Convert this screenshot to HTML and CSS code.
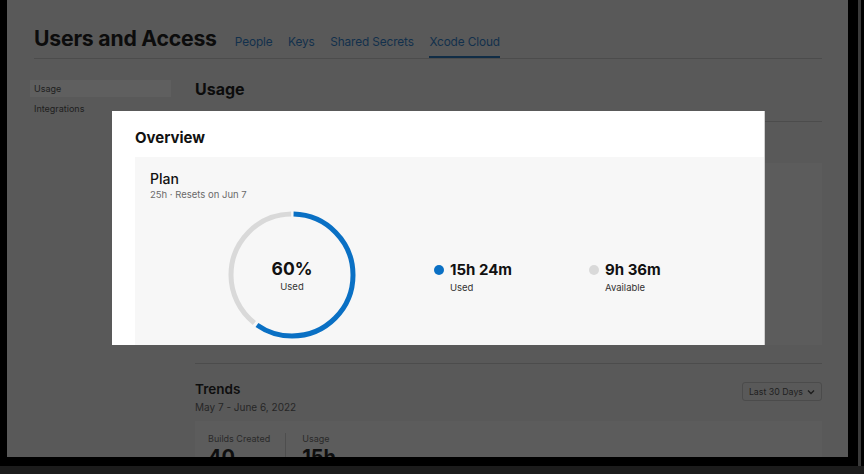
FILE: index.html
```html
<!DOCTYPE html>
<html>
<head>
<meta charset="utf-8">
<link rel="stylesheet" href="styles.css">
</head>
<body>
<div class="frame">
  <div class="screen">
    <header class="top">
      <h1 class="title">Users and Access</h1>
      <nav class="tabs">
        <span class="tab">People</span>
        <span class="tab">Keys</span>
        <span class="tab">Shared Secrets</span>
        <span class="tab active">Xcode Cloud</span>
      </nav>
    </header>
    <div class="body">
      <aside class="side">
        <div class="side-item selected">Usage</div>
        <div class="side-item">Integrations</div>
      </aside>
      <main class="main">
        <h2 class="usage-h">Usage</h2>
        <div class="rule"></div>
        <div class="dim-box"></div>
        <div class="rule rule2"></div>
        <div class="trends-head">
          <div>
            <div class="trends-t">Trends</div>
            <div class="trends-d">May 7 - June 6, 2022</div>
          </div>
          <div class="select">Last 30 Days
            <svg width="8" height="6" viewBox="0 0 8 6"><path d="M1 1.5 L4 4.5 L7 1.5" fill="none" stroke="#1c1c1c" stroke-width="1.3"/></svg>
          </div>
        </div>
        <div class="stats">
          <div class="stat">
            <div class="stat-l">Builds Created</div>
            <div class="stat-v">40 <small>+4%</small></div>
          </div>
          <div class="stat-sep"></div>
          <div class="stat">
            <div class="stat-l">Usage</div>
            <div class="stat-v">15h <small>0%</small></div>
          </div>
        </div>
      </main>
    </div>

    <section class="spot">
      <h3 class="spot-title">Overview</h3>
      <div class="plan">
        <div class="plan-t">Plan</div>
        <div class="plan-s">25h · Resets on Jun 7</div>
        <div class="plan-row">
          <div class="donut">
            <svg width="128" height="128" viewBox="0 0 128 128">
              <g transform="rotate(-90 64 64)">
                <circle cx="64" cy="64" r="61" fill="none" stroke="#d9d9d9" stroke-width="5" stroke-dasharray="150 400" stroke-dashoffset="-231.8"/>
                <circle cx="64" cy="64" r="61" fill="none" stroke="#0a70c4" stroke-width="5" stroke-dasharray="227 400" stroke-dashoffset="-1.6"/>
              </g>
            </svg>
            <div class="donut-c">
              <div class="donut-v">60%</div>
              <div class="donut-l">Used</div>
            </div>
          </div>
          <div class="legend legend-used">
            <span class="dot blue"></span>
            <div>
              <div class="leg-v">15h 24m</div>
              <div class="leg-l">Used</div>
            </div>
          </div>
          <div class="legend legend-avail">
            <span class="dot grey"></span>
            <div>
              <div class="leg-v">9h 36m</div>
              <div class="leg-l">Available</div>
            </div>
          </div>
        </div>
      </div>
    </section>
  </div>
  <div class="edge"></div>
</div>
<div class="bottom"></div>
</body>
</html>
```

FILE: styles.css
```css
* { box-sizing: border-box; }
html, body { margin: 0; padding: 0; }
body {
  width: 864px;
  height: 474px;
  background: #000;
  font-family: Inter, "Noto Sans", "Liberation Sans", sans-serif;
  overflow: hidden;
}
.frame {
  display: flex;
  height: 466px;
  padding-left: 7px;
}
.screen {
  position: relative;
  width: 841px;
  height: 457px;
  background: #595959;
  overflow: hidden;
  color: #101010;
}
.edge {
  width: 3px;
  height: 466px;
  margin-left: 10px;
  background: #3a3a3a;
}
.bottom {
  height: 8px;
  background: #1c1c1c;
}

/* header */
.top {
  display: flex;
  align-items: flex-end;
  margin: 0 26px 0 27px;
  padding-top: 24px;
  border-bottom: 1px solid #4c4c4c;
  height: 59px;
}
.title {
  margin: 0 18px 0 0;
  font-size: 21.2px;
  font-weight: 700;
  letter-spacing: -0.2px;
  line-height: 27px;
  padding-bottom: 6px;
  color: #0c0c0c;
}
.tabs {
  display: flex;
  gap: 15.5px;
}
.tab {
  font-size: 11.8px;
  letter-spacing: -0.1px;
  color: #12304c;
  line-height: 16px;
  padding-bottom: 6px;
  border-bottom: 2px solid transparent;
}
.tab.active {
  border-bottom-color: #112d46;
}

/* body */
.body {
  display: flex;
  padding-left: 23px;
  padding-right: 26px;
}
.side {
  width: 141px;
  margin-right: 24px;
  padding-top: 21px;
}
.side-item {
  font-size: 9px;
  color: #1e1e1e;
  height: 17px;
  line-height: 17px;
  padding-left: 4px;
  margin-bottom: 3px;
}
.side-item.selected {
  background: #5f5f5f;
}
.main {
  flex: 1;
}
.usage-h {
  margin: 20px 0 0;
  font-size: 16px;
  font-weight: 700;
  line-height: 20px;
  color: #0c0c0c;
}
.rule {
  height: 1px;
  background: #4c4c4c;
  margin-top: 22px;
}
.dim-box {
  height: 182px;
  margin-top: 41px;
  background: #5c5c5c;
}
.rule2 {
  margin-top: 18px;
}
.trends-head {
  display: flex;
  justify-content: space-between;
  align-items: flex-start;
  margin-top: 17px;
}
.trends-t {
  font-size: 13.5px;
  font-weight: 600;
  line-height: 17px;
  color: #0e0e0e;
}
.trends-d {
  font-size: 10px;
  color: #262626;
  margin-top: 3px;
  line-height: 13px;
}
.select {
  display: flex;
  align-items: center;
  gap: 4px;
  height: 19px;
  margin-top: 1px;
  padding: 0 6px;
  border: 1px solid #4b4b4b;
  border-radius: 3px;
  font-size: 8.8px;
  color: #1f1f1f;
}
.stats {
  display: flex;
  margin-top: 7px;
  height: 60px;
  background: #5c5c5c;
  padding: 12px 13px 0;
}
.stat-l {
  font-size: 9px;
  color: #2a2a2a;
  line-height: 12px;
}
.stat-v {
  font-size: 20px;
  font-weight: 700;
  line-height: 24px;
  color: #0e0e0e;
}
.stat-v small {
  font-size: 8px;
  font-weight: 400;
  color: #333;
}
.stat-sep {
  width: 1px;
  background: #4e4e4e;
  margin: 0 16px 0 15px;
  align-self: stretch;
}

/* spotlight */
.spot {
  position: absolute;
  left: 105px;
  top: 111px;
  width: 653px;
  height: 234px;
  background: #fff;
  overflow: hidden;
  padding: 18px 0 0 23px;
  border-right: 1px solid #d0d0d0;
}
.spot-title {
  margin: 0;
  font-size: 15px;
  font-weight: 700;
  line-height: 18px;
  color: #111;
}
.plan {
  margin-top: 10px;
  height: 200px;
  background: #f7f7f7;
  padding: 13px 0 0 15px;
}
.plan-t {
  font-size: 14px;
  font-weight: 500;
  line-height: 18px;
  color: #111;
}
.plan-s {
  font-size: 9.5px;
  color: #6a6a6a;
  line-height: 12px;
  margin-top: 1px;
}
.plan-row {
  display: flex;
  align-items: flex-start;
  margin-top: 10px;
  padding-left: 78px;
}
.donut {
  position: relative;
  width: 128px;
  height: 128px;
}
.donut svg { display: block; }
.donut-c {
  position: absolute;
  inset: 0;
  display: flex;
  flex-direction: column;
  align-items: center;
  justify-content: center;
  padding-top: 1px;
}
.donut-v {
  font-size: 17.5px;
  font-weight: 700;
  line-height: 22px;
  color: #111;
}
.donut-l {
  font-size: 9.5px;
  color: #333;
  line-height: 12px;
  margin-top: 1px;
}
.legend {
  display: flex;
  align-items: flex-start;
  gap: 6px;
  margin-top: 50px;
}
.legend-used { margin-left: 78px; }
.legend-avail { margin-left: 77px; }
.dot {
  width: 10px;
  height: 10px;
  border-radius: 50%;
  margin-top: 4px;
}
.dot.blue { background: #0a70c4; }
.dot.grey { background: #d9d9d9; }
.leg-v {
  font-size: 15px;
  font-weight: 700;
  line-height: 18px;
  color: #111;
}
.leg-l {
  font-size: 9.5px;
  color: #333;
  line-height: 12px;
  margin-top: 3px;
}
```
